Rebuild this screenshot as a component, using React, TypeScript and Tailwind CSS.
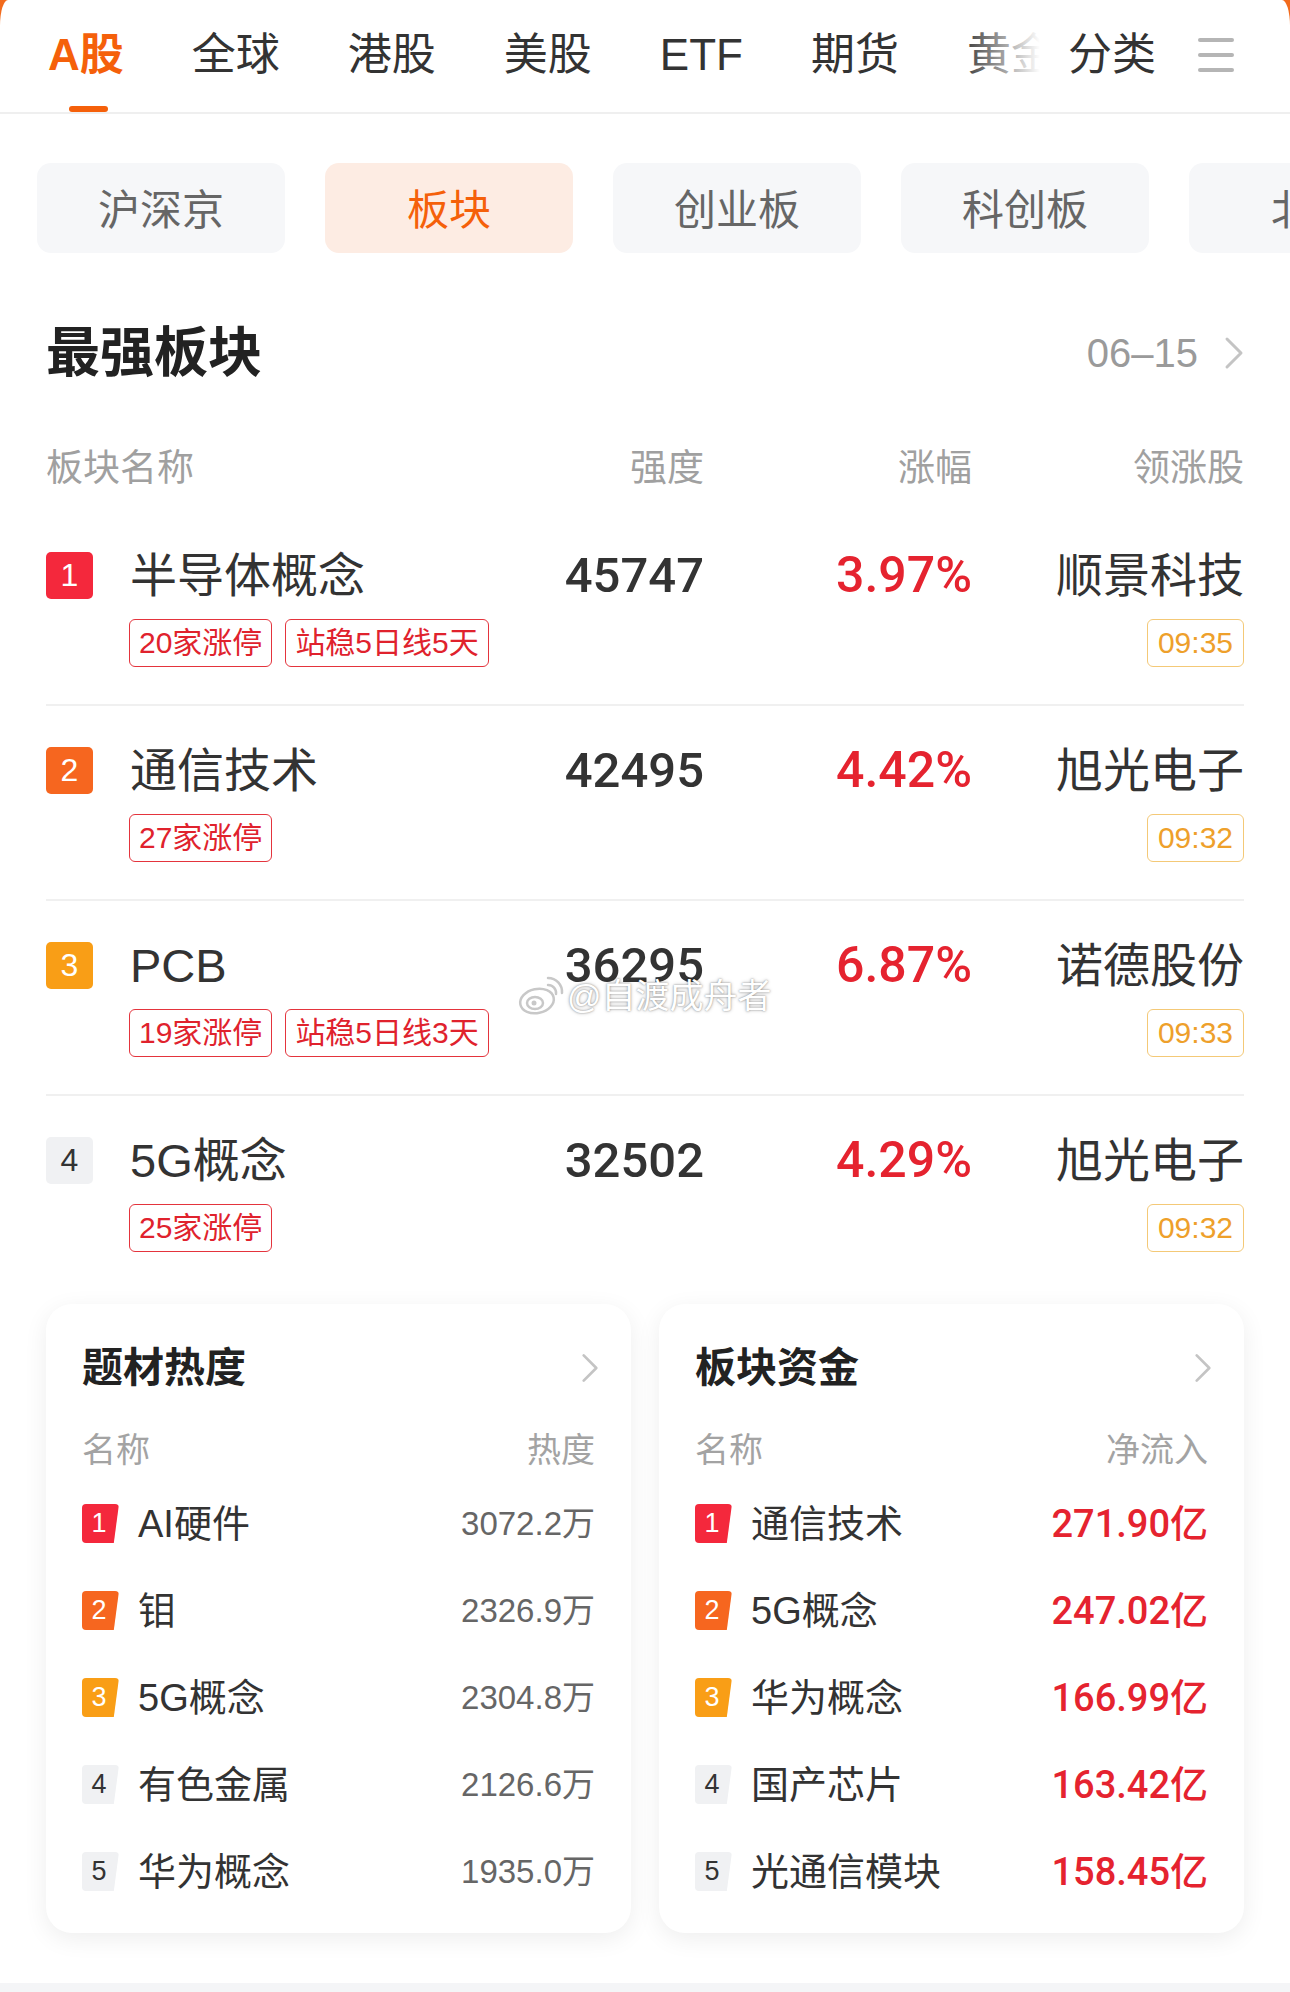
import React from "react";

const rows = [
  { rank: 1, name: "半导体概念", strength: "45747", change: "3.97%", leader: "顺景科技", tags: ["20家涨停", "站稳5日线5天"], time: "09:35" },
  { rank: 2, name: "通信技术", strength: "42495", change: "4.42%", leader: "旭光电子", tags: ["27家涨停"], time: "09:32" },
  { rank: 3, name: "PCB", strength: "36295", change: "6.87%", leader: "诺德股份", tags: ["19家涨停", "站稳5日线3天"], time: "09:33" },
  { rank: 4, name: "5G概念", strength: "32502", change: "4.29%", leader: "旭光电子", tags: ["25家涨停"], time: "09:32" },
];

const rankBg: Record<number, string> = {
  1: "bg-[#f4283c] text-white",
  2: "bg-[#f6661f] text-white",
  3: "bg-[#f99e16] text-white",
  4: "bg-[#f0f1f3] text-[#333333]",
  5: "bg-[#f0f1f3] text-[#333333]",
};

const heat = [
  { name: "AI硬件", value: "3072.2万" },
  { name: "钼", value: "2326.9万" },
  { name: "5G概念", value: "2304.8万" },
  { name: "有色金属", value: "2126.6万" },
  { name: "华为概念", value: "1935.0万" },
];

const funds = [
  { name: "通信技术", value: "271.90亿" },
  { name: "5G概念", value: "247.02亿" },
  { name: "华为概念", value: "166.99亿" },
  { name: "国产芯片", value: "163.42亿" },
  { name: "光通信模块", value: "158.45亿" },
];

function Chevron({ className }: { className?: string }) {
  return (
    <svg viewBox="0 0 20 34" className={className} fill="none">
      <polyline points="3,3 17,17 3,31" stroke="#c4c4c4" strokeWidth="3" strokeLinecap="round" strokeLinejoin="round" />
    </svg>
  );
}

function WeiboLogo() {
  return (
    <svg viewBox="0 0 48 40" className="w-[48px] h-[40px]" fill="none">
      <ellipse cx="20" cy="25" rx="17" ry="12" fill="#ffffff" stroke="#c8c8c8" strokeWidth="2.5" transform="rotate(-12 20 25)" />
      <ellipse cx="18" cy="27" rx="8" ry="6" fill="#ffffff" stroke="#c8c8c8" strokeWidth="2.5" />
      <circle cx="17" cy="27" r="2.5" fill="#c8c8c8" />
      <path d="M31 9 a8 8 0 0 1 8 9" stroke="#c8c8c8" strokeWidth="2.5" strokeLinecap="round" />
      <path d="M31 2 a14 14 0 0 1 14 15" stroke="#c8c8c8" strokeWidth="2.5" strokeLinecap="round" />
    </svg>
  );
}

function MiniCard({ title, col2, items, red }: { title: string; col2: string; items: { name: string; value: string }[]; red?: boolean }) {
  return (
    <div className="bg-white rounded-[26px] shadow-[0_6px_24px_rgba(0,0,0,0.07)] px-[36px] pt-[40px] pb-[18px] flex flex-col">
      <div className="h-[48px] flex items-center justify-between">
        <span className="text-[41px] font-bold text-[#222222] leading-none">{title}</span>
        <Chevron className="w-[18px] h-[34px] -mr-[4px]" />
      </div>
      <div className="mt-[36px] h-[44px] flex items-center justify-between text-[34px] text-[#a3a3a3] leading-none">
        <span>名称</span>
        <span>{col2}</span>
      </div>
      <div className="mt-[8px] flex flex-col">
        {items.map((it, i) => (
          <div key={it.name} className="h-[87px] flex items-center">
            <div
              className={`w-[37px] h-[39px] rounded-[4px] flex items-center justify-center text-[27px] font-medium leading-none pr-[3px] [clip-path:polygon(0_0,100%_0,86%_100%,0_100%)] ${rankBg[i + 1]}`}
            >
              {i + 1}
            </div>
            <span className="ml-[19px] text-[38px] text-[#333333] leading-none">{it.name}</span>
            <span
              className={
                red
                  ? "ml-auto text-[38px] font-medium text-[#e5232f] leading-none font-['Roboto','Noto_Sans_CJK_SC',sans-serif]"
                  : "ml-auto text-[33px] text-[#666666] leading-none"
              }
            >
              {it.value}
            </span>
          </div>
        ))}
      </div>
    </div>
  );
}

export default function App() {
  const tabs = ["A股", "全球", "港股", "美股", "ETF", "期货", "黄金"];
  const pills = ["沪深京", "板块", "创业板", "科创板", "北证"];
  return (
    <div className="relative w-[1290px] h-[1992px] overflow-hidden bg-[#f26b1d] font-['Liberation_Sans','Noto_Sans_CJK_SC',sans-serif]">
      <div className="h-full bg-white rounded-tl-[8px_26px] rounded-tr-[8px_26px] flex flex-col">
        {/* Top tabs */}
        <div className="h-[114px] border-b-2 border-[#efefef] flex items-stretch">
          <div className="relative flex-1 overflow-hidden">
            <div className="flex gap-[68px] pl-[48px] h-full">
              {tabs.map((t, i) => (
                <div key={t} className="relative h-full flex items-center pt-[2px] pb-[4px] shrink-0">
                  <span
                    className={
                      i === 0
                        ? "text-[44px] leading-none font-bold text-[#f5600a]"
                        : "text-[44px] leading-none text-[#333333]"
                    }
                  >
                    {t}
                  </span>
                  {i === 0 && (
                    <div className="absolute bottom-0 left-[21px] w-[39px] h-[6px] rounded-full bg-[#f5600a]" />
                  )}
                </div>
              ))}
            </div>
            <div className="absolute top-0 right-0 h-full w-[80px] bg-gradient-to-r from-white/0 to-white" />
          </div>
          <div className="w-[250px] flex items-center pt-[2px] pb-[4px] shrink-0">
            <span className="ml-[28px] text-[44px] leading-none text-[#333333]">分类</span>
            <div className="ml-[42px] flex flex-col gap-[11px]">
              <div className="w-[36px] h-[4px] rounded-full bg-[#b5b5b5]" />
              <div className="w-[36px] h-[4px] rounded-full bg-[#b5b5b5]" />
              <div className="w-[36px] h-[4px] rounded-full bg-[#b5b5b5]" />
            </div>
          </div>
        </div>

        {/* Sub tabs */}
        <div className="mt-[49px] flex gap-[40px] pl-[37px] overflow-hidden">
          {pills.map((p, i) => (
            <div
              key={p}
              className={
                i === 1
                  ? "w-[248px] h-[90px] pt-[5px] shrink-0 rounded-[14px] bg-[#fdece3] flex items-center justify-center text-[42px] text-[#f5600a] leading-none"
                  : "w-[248px] h-[90px] pt-[5px] shrink-0 rounded-[14px] bg-[#f6f7f9] flex items-center justify-center text-[42px] text-[#666666] leading-none"
              }
            >
              {p}
            </div>
          ))}
        </div>

        {/* Title row */}
        <div className="mt-[68px] h-[64px] px-[46px] flex items-center justify-between">
          <span className="text-[54px] font-bold text-[#222222] leading-none">最强板块</span>
          <div className="flex items-center">
            <span className="text-[40px] text-[#9a9a9a] leading-none">06–15</span>
            <Chevron className="ml-[26px] w-[20px] h-[34px]" />
          </div>
        </div>

        {/* Header row */}
        <div className="mt-[59px] h-[48px] px-[46px] grid grid-cols-[1fr_200px_268px_272px] items-center text-[37px] text-[#a0a0a0] leading-none">
          <span>板块名称</span>
          <span className="text-right">强度</span>
          <span className="text-right">涨幅</span>
          <span className="text-right">领涨股</span>
        </div>

        {/* Rows */}
        <div className="mt-[19px] px-[46px] flex flex-col">
          {rows.map((r, idx) => (
            <div
              key={r.rank}
              className={
                idx < rows.length - 1
                  ? "pt-[40px] pb-[37px] border-b-2 border-[#f0f0f0] grid grid-cols-[1fr_200px_268px_272px] grid-rows-[48px_48px] gap-y-[20px]"
                  : "pt-[40px] pb-[38px] grid grid-cols-[1fr_200px_268px_272px] grid-rows-[48px_48px] gap-y-[20px]"
              }
            >
              <div className="flex items-center">
                <div className={`w-[47px] h-[47px] rounded-[5px] flex items-center justify-center text-[32px] font-medium leading-none ${rankBg[r.rank]}`}>
                  {r.rank}
                </div>
                <span className="ml-[37px] text-[47px] text-[#333333] leading-none">{r.name}</span>
              </div>
              <div className="flex items-center justify-end text-[49px] font-medium text-[#333333] leading-none font-['Roboto',sans-serif]">
                {r.strength}
              </div>
              <div className="flex items-center justify-end text-[50px] font-medium text-[#e5232f] leading-none font-['Roboto',sans-serif]">
                {r.change}
              </div>
              <div className="flex items-center justify-end text-[47px] text-[#333333] leading-none">{r.leader}</div>

              <div className="col-span-3 flex items-center gap-[13px] pl-[83px]">
                {r.tags.map((t) => (
                  <span
                    key={t}
                    className="h-[48px] px-[9px] flex items-center border-[1.5px] border-[#e4343d] rounded-[6px] text-[30px] text-[#e0222d] leading-none"
                  >
                    {t}
                  </span>
                ))}
              </div>
              <div className="flex items-center justify-end">
                <span className="h-[48px] px-[10px] flex items-center border-[1.5px] border-[#f4c977] rounded-[6px] text-[30px] text-[#eea02b] leading-none">
                  {r.time}
                </span>
              </div>
            </div>
          ))}
        </div>

        {/* Cards */}
        <div className="mt-[14px] px-[46px] grid grid-cols-2 gap-[28px]">
          <MiniCard title="题材热度" col2="热度" items={heat} />
          <MiniCard title="板块资金" col2="净流入" items={funds} red />
        </div>

        <div className="mt-auto h-[9px] bg-[#f4f5f7]" />
      </div>

      {/* Watermark */}
      <div className="absolute left-[517px] top-[976px] flex items-center gap-[2px] pointer-events-none">
        <WeiboLogo />
        <span className="text-[34px] leading-none text-white [text-shadow:0_0_2px_rgba(0,0,0,0.45),0_0_4px_rgba(0,0,0,0.2)]">
          @自渡成舟者
        </span>
      </div>
    </div>
  );
}
